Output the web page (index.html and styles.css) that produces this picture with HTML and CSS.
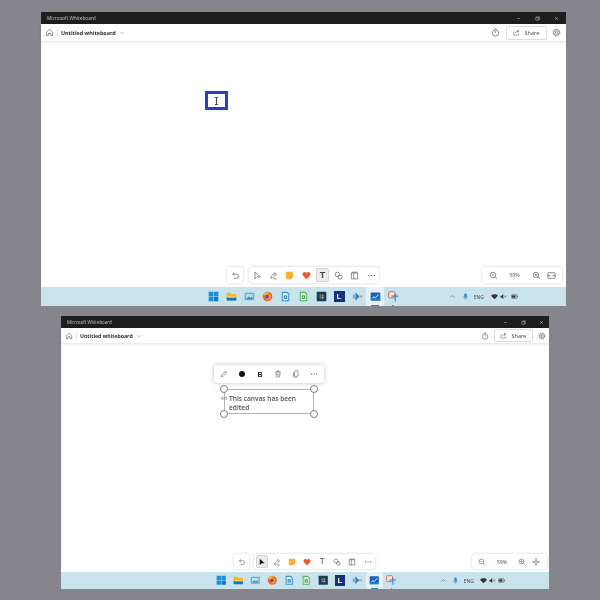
FILE: index.html
```html
<!DOCTYPE html>
<html lang="en">
<head>
    <meta charset="UTF-8">
    <title>Microsoft Whiteboard</title>
    <link rel="stylesheet" href="styles.css">
</head>
<body>
    <svg class="sprites" aria-hidden="true">
        <symbol id="i-home" viewBox="0 0 16 16"><path d="M2.5 7.5 8 2.5l5.5 5v6H10V9.500H6v4H2.500z"/></symbol>
        <symbol id="i-chevron" viewBox="0 0 16 16"><path d="M3 5.500l5 5 5-5"/></symbol>
        <symbol id="i-timer" viewBox="0 0 16 16"><circle cx="8" cy="9" r="5.500"/><path d="M8 9V5.500M6 1.500h4"/></symbol>
        <symbol id="i-share" viewBox="0 0 16 16"><path d="M3 6H2v8h10.500v-3.500M5.500 10c.5-3 3-4.800 6-4.800M10.500 2.500l3.500 2.700-3.500 2.700z"/></symbol>
        <symbol id="i-gear" viewBox="0 0 16 16"><circle cx="8" cy="8" r="2"/><circle cx="8" cy="8" r="5"/><circle cx="8" cy="8" r="6" stroke-dasharray="2.400 2.300"/></symbol>
        <symbol id="i-min" viewBox="0 0 16 16"><path d="M3 8h10"/></symbol>
        <symbol id="i-max" viewBox="0 0 16 16"><path d="M5.500 4V2.500H14V11h-2M2.500 5H11v8.500H2.500z"/></symbol>
        <symbol id="i-close" viewBox="0 0 16 16"><path d="M3 3l10 10M13 3 3 13"/></symbol>
        <symbol id="i-undo" viewBox="0 0 16 16"><path d="M5.500 2.500 3 5.500l2.500 3M3 5.500h6.500a3.500 3.500 0 0 1 0 7.500H5.500"/></symbol>
        <symbol id="i-pointer" viewBox="0 0 16 16"><path d="M3.500 2v12l3.500-3.700 6 .2z"/></symbol>
        <symbol id="i-pointer-solid" viewBox="0 0 16 16"><path class="solid" d="M3.500 1.500v13l3.700-4 6.300.2z"/></symbol>
        <symbol id="i-pen" viewBox="0 0 16 16"><path d="M3 13l.8-3.500 6.700-6.700 2.700 2.700-6.700 6.700zM8.800 4.500l2.700 2.700M8 14h6"/></symbol>
        <symbol id="i-edit" viewBox="0 0 16 16"><path d="M2.500 13.500l.8-3.500 7.700-7.700 2.700 2.700-7.700 7.700zM9.300 4l2.700 2.700"/></symbol>
        <symbol id="i-note" viewBox="0 0 16 16"><path class="note" d="M3.500 1.500h11v8l-5 5h-6a2 2 0 0 1-2-2v-9a2 2 0 0 1 2-2z"/><path class="note-fold" d="M14.500 9.500h-3a2 2 0 0 0-2 2v3z"/></symbol>
        <symbol id="i-heart" viewBox="0 0 16 16"><path class="heart" d="M8 14.500 2 8.500C-.500 5.500 1.500 1.800 4.500 1.800c1.500 0 2.700.8 3.500 2 .8-1.200 2-2 3.500-2 3 0 5 3.700 2.500 6.700z"/></symbol>
        <symbol id="i-shapes" viewBox="0 0 16 16"><circle cx="6" cy="6" r="4"/><rect x="7.500" y="7.500" width="6.500" height="6.500" rx="2"/></symbol>
        <symbol id="i-template" viewBox="0 0 16 16"><path d="M4 3.500V2h8.500v1.500M2.500 3.500h11v10.500h-11zM6.500 3.500V14"/></symbol>
        <symbol id="i-more" viewBox="0 0 16 16"><path class="solid" d="M2 7h2.200v2H2zM7 7h2.200v2H7zM12 7h2.200v2H12z"/></symbol>
        <symbol id="i-trash" viewBox="0 0 16 16"><path d="M2.500 4h11M6 4V2h4v2M3.800 4l.9 10h6.600l.9-10M6.500 7v4M9.500 7v4"/></symbol>
        <symbol id="i-copy" viewBox="0 0 16 16"><path d="M5 3a1.500 1.500 0 0 1 1.500-1.500h4A1.500 1.500 0 0 1 12 3v8a1.500 1.500 0 0 1-1.500 1.500h-4A1.500 1.500 0 0 1 5 11zM3 5v7.500A2 2 0 0 0 5 14.500h5"/></symbol>
        <symbol id="i-dot" viewBox="0 0 16 16"><circle class="solid" cx="8" cy="8" r="6"/></symbol>
        <symbol id="i-arrows" viewBox="0 0 16 8"><path d="M5 1 1.500 4 5 7zM5 4h2M11 1 7.500 4 11 7zM11 4h3.500"/></symbol>
        <symbol id="i-zoom-out" viewBox="0 0 16 16"><circle cx="7" cy="7" r="4.800"/><path d="M10.500 10.500 14.500 14.500M4.800 7h4.400"/></symbol>
        <symbol id="i-zoom-in" viewBox="0 0 16 16"><circle cx="7" cy="7" r="4.800"/><path d="M10.500 10.500 14.500 14.500M4.800 7h4.400M7 4.800v4.400"/></symbol>
        <symbol id="i-fit" viewBox="0 0 16 16"><rect x="1.500" y="3" width="13" height="10" rx="1.500"/><path d="M1.500 8h3.500M11 8h3.500M3.800 6.500 5.300 8 3.800 9.500M12.200 6.500 10.700 8l1.500 1.500"/></symbol>
        <symbol id="i-center" viewBox="0 0 16 16"><circle cx="8" cy="8" r="2.800"/><path d="M8 1v4M8 11v4M1 8h4M11 8h4M6.500 2.500 8 1l1.500 1.500M6.500 13.500 8 15l1.500-1.500M2.500 6.500 1 8l1.500 1.500M13.500 6.500 15 8l-1.500 1.500"/></symbol>
        <symbol id="i-caret" viewBox="0 0 16 16"><path d="M3 10.500l5-5 5 5"/></symbol>
        <symbol id="i-mic" viewBox="0 0 16 16"><rect class="mic" x="5" y="1" width="6" height="10" rx="3"/><path class="mic-line" d="M3 8a5 5 0 0 0 10 0M8 13v2"/></symbol>
        <symbol id="i-wifi" viewBox="0 0 16 16"><path class="solid" d="M0 6.500C4.500 2 11.500 2 16 6.500L8 14z"/></symbol>
        <symbol id="i-sound" viewBox="0 0 16 16"><path class="solid" d="M1 6h2.500L7.500 2.500v11L3.500 10H1z"/><path d="M10 6l4 4M14 6l-4 4"/></symbol>
        <symbol id="i-battery" viewBox="0 0 16 16"><rect x="1" y="4" width="12.500" height="8" rx="1.500"/><rect class="solid" x="2.500" y="5.500" width="7.500" height="5"/><path d="M15 6.500v3"/></symbol>
        <symbol id="t-start" viewBox="0 0 16 16"><path fill="#1a8fdc" d="M1 1h6.600v6.600H1zM8.400 1H15v6.600H8.400zM1 8.400h6.600V15H1z"/><path fill="#0f78c8" d="M8.400 8.400H15V15H8.400z"/></symbol>
        <symbol id="t-folder" viewBox="0 0 16 16"><path fill="#f3b72f" d="M1 2.500h5.500L8 4.500h7v9H1z"/><path fill="#1277bd" d="M1 9.500h14V14H1z"/><path fill="#f7d668" d="M3 7.500h10v2H3z"/></symbol>
        <symbol id="t-photos" viewBox="0 0 16 16"><rect fill="#5eaed8" x="1" y="2.500" width="14" height="11" rx="1.500"/><rect fill="#bfe2f2" x="3" y="4.500" width="10" height="7"/><path fill="#2c86bb" d="M3 11.500l3.500-3.500 2.500 2 2-1.500 2 3z"/><circle fill="#f1c24b" cx="10.500" cy="6.500" r="1.200"/></symbol>
        <symbol id="t-firefox" viewBox="0 0 16 16"><circle fill="#ef6a2a" cx="8" cy="8" r="7"/><path fill="#f7b733" d="M2 5c2-3.500 7-4.500 10-2-2-.5-4 0-4.500 1.500C11 4.500 13 7 12 10c-1 2.500-4.500 3.500-7 2C7 12 9 10.800 8.500 9 7 8.300 4.500 8 4 6.500z"/><circle fill="#7b3fb6" cx="7.500" cy="8" r="2.800"/></symbol>
        <symbol id="t-doc-blue" viewBox="0 0 16 16"><path fill="#3d8fc7" d="M2.500 1h8l3 3v11h-11z"/><path fill="#e6f2f8" d="M4 3h6l2 2v8.500H4z"/><path fill="#2a7ab4" d="M5.500 6.500h5v5h-5z"/><path fill="#e6f2f8" d="M7 8h2v2H7z"/></symbol>
        <symbol id="t-doc-green" viewBox="0 0 16 16"><path fill="#52b45a" d="M2.500 1h8l3 3v11h-11z"/><path fill="#e8f5e4" d="M4 3h6l2 2v8.500H4z"/><path fill="#3f9d48" d="M5.500 6.500h5v5h-5z"/><path fill="#e8f5e4" d="M7 8h2v2H7z"/></symbol>
        <symbol id="t-store" viewBox="0 0 16 16"><rect fill="#173b58" x="1" y="1" width="14" height="14" rx="1"/><path fill="#e2492b" d="M5 5h2.800v2.800H5z"/><path fill="#6cb33f" d="M8.200 5H11v2.800H8.200z"/><path fill="#2a9adb" d="M5 8.200h2.800V11H5z"/><path fill="#f2b632" d="M8.200 8.200H11V11H8.200z"/></symbol>
        <symbol id="t-flow" viewBox="0 0 16 16"><path fill="#2f7fc4" d="M5 2l6 6-6 6z"/><path fill="#7bb4e2" d="M1 5h4v6H1z"/><path fill="#e58d7b" d="M11 6.500h4v3h-4z"/></symbol>
        <symbol id="t-board" viewBox="0 0 16 16"><rect fill="#1c5fc4" x="1" y="2" width="14" height="12" rx="1"/><path fill="none" stroke="#fff" stroke-width="1.400" d="M3.500 10.500l2.500-2 2 1.500 4.500-5"/><path fill="#12a0de" d="M1 11h14v3H1z" opacity=".6"/></symbol>
        <symbol id="t-snip" viewBox="0 0 16 16"><rect fill="#fbe6de" stroke="#d9583b" stroke-width="1.300" x="1" y="1" width="9" height="9" rx="1.500"/><path fill="none" stroke="#2e8ccf" stroke-width="1.600" d="M5 7.500h10M10.500 4v11"/></symbol>
    </svg>

    <section class="window window-a">
        <div class="titlebar">
            <span class="app-name">Microsoft Whiteboard</span>
            <div class="win-controls">
                <svg class="ic"><use href="#i-min"/></svg>
                <svg class="ic"><use href="#i-max"/></svg>
                <svg class="ic"><use href="#i-close"/></svg>
            </div>
        </div>
        <header class="appbar">
            <svg class="ic home"><use href="#i-home"/></svg>
            <span class="board-name">Untitled whiteboard</span>
            <svg class="ic chevron"><use href="#i-chevron"/></svg>
            <svg class="ic timer"><use href="#i-timer"/></svg>
            <button class="share"><svg class="ic"><use href="#i-share"/></svg>Share</button>
            <svg class="ic gear"><use href="#i-gear"/></svg>
        </header>
        <main class="canvas">
            <div class="marker"><span class="ibeam"></span></div>
            <div class="dock">
                <div class="pill undo"><span class="cell"><svg class="ic"><use href="#i-undo"/></svg></span></div>
                <div class="pill tools">
                    <span class="cell"><svg class="ic"><use href="#i-pointer"/></svg></span>
                    <span class="cell"><svg class="ic"><use href="#i-pen"/></svg></span>
                    <span class="cell"><svg class="ic"><use href="#i-note"/></svg></span>
                    <span class="cell"><svg class="ic"><use href="#i-heart"/></svg></span>
                    <span class="cell active"><span class="glyph">T</span></span>
                    <span class="cell"><svg class="ic"><use href="#i-shapes"/></svg></span>
                    <span class="cell"><svg class="ic"><use href="#i-template"/></svg></span>
                    <span class="cell"><svg class="ic"><use href="#i-more"/></svg></span>
                </div>
            </div>
            <div class="pill zoom">
                <span class="cell"><svg class="ic"><use href="#i-zoom-out"/></svg></span>
                <span class="percent">59%</span>
                <span class="cell"><svg class="ic"><use href="#i-zoom-in"/></svg></span>
                <span class="cell last"><svg class="ic"><use href="#i-fit"/></svg></span>
            </div>
        </main>
        <footer class="taskbar">
            <div class="apps">
                <span class="app"><svg><use href="#t-start"/></svg></span>
                <span class="app"><svg><use href="#t-folder"/></svg></span>
                <span class="app"><svg><use href="#t-photos"/></svg></span>
                <span class="app"><svg><use href="#t-firefox"/></svg></span>
                <span class="app"><svg><use href="#t-doc-blue"/></svg></span>
                <span class="app"><svg><use href="#t-doc-green"/></svg></span>
                <span class="app"><svg><use href="#t-store"/></svg></span>
                <span class="app"><span class="l-tile">L</span></span>
                <span class="app"><svg><use href="#t-flow"/></svg></span>
                <span class="app current"><svg><use href="#t-board"/></svg></span>
                <span class="app running"><svg><use href="#t-snip"/></svg></span>
            </div>
            <div class="tray">
                <svg class="ic caret"><use href="#i-caret"/></svg>
                <svg class="ic mic-ic"><use href="#i-mic"/></svg>
                <span class="lang">ENG</span>
                <svg class="ic wifi"><use href="#i-wifi"/></svg>
                <svg class="ic sound"><use href="#i-sound"/></svg>
                <svg class="ic battery"><use href="#i-battery"/></svg>
            </div>
        </footer>
    </section>

    <section class="window window-b">
        <div class="titlebar">
            <span class="app-name">Microsoft Whiteboard</span>
            <div class="win-controls">
                <svg class="ic"><use href="#i-min"/></svg>
                <svg class="ic"><use href="#i-max"/></svg>
                <svg class="ic"><use href="#i-close"/></svg>
            </div>
        </div>
        <header class="appbar">
            <svg class="ic home"><use href="#i-home"/></svg>
            <span class="board-name">Untitled whiteboard</span>
            <svg class="ic chevron"><use href="#i-chevron"/></svg>
            <svg class="ic timer"><use href="#i-timer"/></svg>
            <button class="share"><svg class="ic"><use href="#i-share"/></svg>Share</button>
            <svg class="ic gear"><use href="#i-gear"/></svg>
        </header>
        <main class="canvas">
            <div class="popup">
                <span class="popup-cell"><svg class="ic"><use href="#i-edit"/></svg></span>
                <span class="popup-cell"><svg class="ic dark"><use href="#i-dot"/></svg></span>
                <span class="popup-cell"><span class="glyph bold">B</span></span>
                <span class="popup-cell"><svg class="ic"><use href="#i-trash"/></svg></span>
                <span class="popup-cell"><svg class="ic"><use href="#i-copy"/></svg></span>
                <span class="popup-cell"><svg class="ic"><use href="#i-more"/></svg></span>
            </div>
            <div class="textbox">
                <span class="handle tl"></span>
                <span class="handle tr"></span>
                <span class="handle bl"></span>
                <span class="handle br"></span>
                <svg class="resize-arrows"><use href="#i-arrows"/></svg>
                <p class="textbox-text">This canvas has been edited</p>
            </div>
            <div class="dock">
                <div class="pill undo"><span class="cell"><svg class="ic"><use href="#i-undo"/></svg></span></div>
                <div class="pill tools">
                    <span class="cell active"><svg class="ic dark"><use href="#i-pointer-solid"/></svg></span>
                    <span class="cell"><svg class="ic"><use href="#i-pen"/></svg></span>
                    <span class="cell"><svg class="ic"><use href="#i-note"/></svg></span>
                    <span class="cell"><svg class="ic"><use href="#i-heart"/></svg></span>
                    <span class="cell"><span class="glyph thin">T</span></span>
                    <span class="cell"><svg class="ic"><use href="#i-shapes"/></svg></span>
                    <span class="cell"><svg class="ic"><use href="#i-template"/></svg></span>
                    <span class="cell"><svg class="ic"><use href="#i-more"/></svg></span>
                </div>
            </div>
            <div class="pill zoom">
                <span class="cell"><svg class="ic"><use href="#i-zoom-out"/></svg></span>
                <span class="percent">59%</span>
                <span class="cell"><svg class="ic"><use href="#i-zoom-in"/></svg></span>
                <span class="cell last"><svg class="ic"><use href="#i-center"/></svg></span>
            </div>
        </main>
        <footer class="taskbar">
            <div class="apps">
                <span class="app"><svg><use href="#t-start"/></svg></span>
                <span class="app"><svg><use href="#t-folder"/></svg></span>
                <span class="app"><svg><use href="#t-photos"/></svg></span>
                <span class="app"><svg><use href="#t-firefox"/></svg></span>
                <span class="app"><svg><use href="#t-doc-blue"/></svg></span>
                <span class="app"><svg><use href="#t-doc-green"/></svg></span>
                <span class="app"><svg><use href="#t-store"/></svg></span>
                <span class="app"><span class="l-tile">L</span></span>
                <span class="app"><svg><use href="#t-flow"/></svg></span>
                <span class="app current"><svg><use href="#t-board"/></svg></span>
                <span class="app running"><svg><use href="#t-snip"/></svg></span>
            </div>
            <div class="tray">
                <svg class="ic caret"><use href="#i-caret"/></svg>
                <svg class="ic mic-ic"><use href="#i-mic"/></svg>
                <span class="lang">ENG</span>
                <svg class="ic wifi"><use href="#i-wifi"/></svg>
                <svg class="ic sound"><use href="#i-sound"/></svg>
                <svg class="ic battery"><use href="#i-battery"/></svg>
            </div>
        </footer>
    </section>
</body>
</html>
```
FILE: styles.css
```css
html, body {
    margin: 0;
    height: 100%;
}

body {
    position: relative;
    width: 600px;
    height: 600px;
    overflow: hidden;
    background-color: #85858b;
    font-family: "Open Sans", "Liberation Sans", sans-serif;
}

.sprites {
    display: none;
}

/* the two windows sit on a free desktop */
.window {
    position: absolute;
    display: flex;
    flex-direction: column;
    background-color: #fff;
    filter: blur(0.3px);
}

.window-a {
    left: 41px;
    top: 12px;
    width: 525px;
    height: 294px;
    --title-h: 12px;
    --bar-h: 17px;
    --task-h: 19px;
    --cell: 16.25px;
    --ic: 9px;
    --app: 18px;
    --app-ic: 11px;
}

.window-b {
    left: 61px;
    top: 316px;
    width: 488px;
    height: 273px;
    --title-h: 12px;
    --bar-h: 15px;
    --task-h: 17px;
    --cell: 15.125px;
    --ic: 8px;
    --app: 17px;
    --app-ic: 10.5px;
}

.ic {
    width: var(--ic);
    height: var(--ic);
    fill: none;
    stroke: #5a5a5a;
    stroke-width: 1.2;
    flex: none;
    color: #555;
}

.ic.dark {
    stroke: #111;
    color: #111;
}

.solid {
    fill: currentColor;
    stroke: none;
}

.note {
    fill: #f9b233;
    stroke: none;
}

.note-fold {
    fill: #f58a3c;
    stroke: none;
}

.heart {
    fill: #f0582c;
    stroke: none;
}

.mic {
    fill: #3f86d2;
    stroke: none;
}

.mic-line {
    stroke: #3f86d2;
}

/* title bar */
.titlebar {
    flex: none;
    display: flex;
    align-items: center;
    justify-content: space-between;
    height: var(--title-h);
    background-color: #1e1e1e;
}

.app-name {
    padding-left: 6px;
    color: #c8c8c8;
    font-size: 4.8px;
}

.window-b .app-name {
    font-size: 4.4px;
}

.win-controls {
    display: flex;
    align-items: center;
}

.win-controls .ic {
    width: 5px;
    height: 5px;
    stroke: #c4c4c4;
    stroke-width: 1.6;
}

.window-a .win-controls {
    gap: 14px;
    padding-right: 7px;
}

.window-b .win-controls {
    gap: 13px;
    padding-right: 5.5px;
}

/* app bar */
.appbar {
    flex: none;
    display: flex;
    align-items: center;
    height: var(--bar-h);
    box-shadow: 0 1px 3px rgba(0, 0, 0, 0.12);
    position: relative;
    z-index: 1;
}

.home {
    margin-left: 4px;
    padding-right: 3px;
    border-right: 1px solid #e4e4e4;
}

.board-name {
    margin-left: 3px;
    color: #2b2b2b;
    font-size: 5.4px;
    font-weight: 700;
}

.window-b .board-name {
    font-size: 5.2px;
}

.chevron {
    width: 6px;
    height: 6px;
    margin-left: 3px;
    stroke: #777;
}

.timer {
    margin-left: auto;
}

.share {
    display: flex;
    align-items: center;
    justify-content: center;
    gap: 4px;
    padding: 0;
    border: 1px solid #dcdcdc;
    border-radius: 2px;
    background: #fff;
    color: #444;
    font-family: inherit;
    font-size: 5.6px;
}

.share .ic {
    width: 7px;
    height: 7px;
}

.window-a .timer { margin-right: 6px; }
.window-a .share { width: 41px; height: 14px; }
.window-a .gear { margin: 0 5px 0 5px; }
.window-b .timer { margin-right: 5px; }
.window-b .share { width: 39px; height: 13px; }
.window-b .gear { margin: 0 3px 0 5px; }

/* canvas */
.canvas {
    flex: 1;
    position: relative;
}

.marker {
    position: absolute;
    left: 164px;
    top: 50px;
    box-sizing: border-box;
    width: 23px;
    height: 19px;
    border: 3px solid #2a40c4;
    display: flex;
    align-items: center;
    justify-content: center;
}

.ibeam {
    width: 1px;
    height: 8px;
    background-color: #444;
    position: relative;
}

.ibeam::before,
.ibeam::after {
    content: "";
    position: absolute;
    left: -1px;
    width: 3px;
    height: 1px;
    background-color: #444;
}

.ibeam::before { top: 0; }
.ibeam::after { bottom: 0; }

/* floating toolbars */
.dock {
    position: absolute;
    display: flex;
}

.window-a .dock { left: 186px; bottom: 4px; gap: 6px; }
.window-b .dock { left: 173px; bottom: 3px; gap: 5px; }

.pill {
    display: flex;
    align-items: center;
    background-color: #fff;
    border-radius: 3px;
    box-shadow: 0 0 3px rgba(0, 0, 0, 0.2);
}

.window-a .pill { height: 16px; }
.window-b .pill { height: 15px; }

.cell {
    flex: none;
    display: flex;
    align-items: center;
    justify-content: center;
    width: var(--cell);
    height: 100%;
    box-sizing: border-box;
}

.cell.active {
    width: calc(var(--cell) - 3px);
    height: calc(100% - 2px);
    margin: 0 1.5px;
    background-color: #ececec;
    border: 1px solid #d2d2d2;
    border-radius: 2px;
}

.glyph {
    color: #444;
    font-family: "Liberation Sans", sans-serif;
    font-size: 9px;
    font-weight: 700;
    line-height: 1;
}

.glyph.thin {
    color: #666;
    font-weight: 400;
}

.glyph.bold {
    color: #222;
    font-size: 7px;
}

.zoom {
    position: absolute;
}

.percent {
    flex: none;
    text-align: center;
    color: #555;
    font-size: 5.4px;
}

.window-a .zoom { right: 4px; bottom: 4px; width: 80px; padding-left: 4px; box-sizing: border-box; }
.window-a .zoom .cell { width: 14px; }
.window-a .zoom .last { margin-left: 1px; }
.window-a .percent { width: 29px; }
.window-b .zoom { right: 2px; bottom: 3px; width: 75px; padding-left: 4px; box-sizing: border-box; }
.window-b .zoom .cell { width: 12px; }
.window-b .zoom .last { margin-left: 2px; }
.window-b .percent { width: 28px; }

/* text box on the second canvas */
.popup {
    position: absolute;
    left: 153px;
    top: 22px;
    width: 110px;
    height: 18px;
    display: flex;
    align-items: center;
    padding: 0 1px;
    box-sizing: border-box;
    background-color: #fff;
    border-radius: 3px;
    box-shadow: 0 0 4px rgba(0, 0, 0, 0.25);
}

.popup-cell {
    flex: 1;
    display: flex;
    align-items: center;
    justify-content: center;
}

.textbox {
    position: absolute;
    left: 163px;
    top: 46px;
    width: 90px;
    height: 25px;
    box-sizing: border-box;
    border: 1px solid #b4b4b4;
    padding: 4px 4px;
}

.textbox-text {
    margin: 0;
    color: #555;
    font-size: 6.6px;
    font-weight: 600;
    line-height: 9px;
    width: 78px;
}

.handle {
    position: absolute;
    width: 8px;
    height: 8px;
    box-sizing: border-box;
    border: 1px solid #808080;
    border-radius: 50%;
    background-color: #fff;
}

.handle.tl { left: -5px; top: -5px; }
.handle.tr { right: -5px; top: -5px; }
.handle.bl { left: -5px; bottom: -5px; }
.handle.br { right: -5px; bottom: -5px; }

.resize-arrows {
    position: absolute;
    left: -5px;
    top: 6px;
    width: 9px;
    height: 4.5px;
    fill: none;
    stroke: #999;
    stroke-width: 1.2;
}

/* taskbar */
.taskbar {
    flex: none;
    display: flex;
    align-items: center;
    height: var(--task-h);
    background-color: #c9e3ec;
}

.apps {
    display: flex;
    height: 100%;
}

.window-a .apps { padding-left: 163px; }
.window-b .apps { padding-left: 151.500px; }

.app {
    position: relative;
    display: flex;
    align-items: center;
    justify-content: center;
    width: var(--app);
    height: 100%;
}

.app svg {
    width: var(--app-ic);
    height: var(--app-ic);
}

.app.current {
    background-color: rgba(255, 255, 255, 0.55);
    border-radius: 2px;
}

.app.current::after,
.app.running::after {
    content: "";
    position: absolute;
    bottom: 0;
    height: 1.500px;
    background-color: #2f82c8;
    border-radius: 1px;
}

.app.current::after {
    left: 5px;
    right: 5px;
}

.app.running::after {
    left: 8px;
    right: 8px;
    background-color: #777;
}

.l-tile {
    display: flex;
    align-items: center;
    justify-content: center;
    width: var(--app-ic);
    height: var(--app-ic);
    background-color: #17307c;
    color: #fff;
    font-family: "Liberation Sans", sans-serif;
    font-size: 8px;
    font-weight: 700;
}

.tray {
    display: flex;
    align-items: center;
    margin-left: auto;
}

.tray .ic {
    width: 7px;
    height: 7px;
}

.tray .wifi,
.tray .sound,
.tray .battery {
    color: #333;
    stroke: #333;
}

.lang {
    color: #444;
    font-size: 5px;
}

.window-a .tray { padding-right: 48px; }
.window-a .lang { margin: 0 7px 0 5px; }
.window-a .mic-ic { margin-left: 6px; }
.window-a .sound { margin-left: 2px; }
.window-a .battery { margin-left: 4px; }
.window-b .tray { padding-right: 44px; }
.window-b .lang { margin: 0 6px 0 5px; }
.window-b .mic-ic { margin-left: 5px; }
.window-b .sound { margin-left: 2px; }
.window-b .battery { margin-left: 2px; }
```
